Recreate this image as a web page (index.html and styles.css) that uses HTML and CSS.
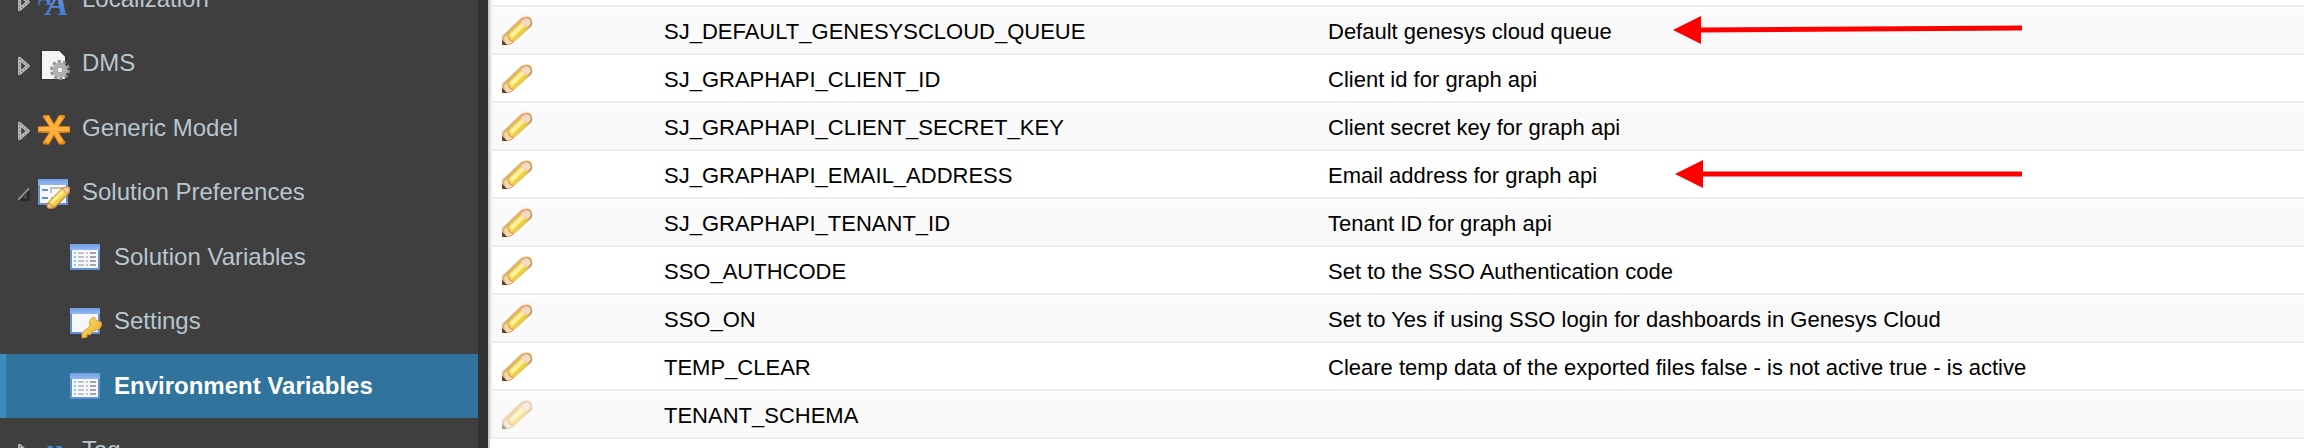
FILE: index.html
```html
<!DOCTYPE html>
<html lang="en">
  <head>
    <meta charset="utf-8" />
    <title>Environment Variables</title>
    <link rel="stylesheet" href="styles.css" />
  </head>
  <body>
    <!-- Shared icons -->
    <svg class="sprite" aria-hidden="true">
      <defs>
        <linearGradient id="wood" x1="0" y1="0" x2="1" y2="1">
          <stop offset="0.3" stop-color="#e6bc80" />
          <stop offset="0.7" stop-color="#d08a3c" />
        </linearGradient>
        <linearGradient id="bar" x1="0" y1="0" x2="0" y2="1">
          <stop offset="0" stop-color="#6f9fe4" />
          <stop offset="1" stop-color="#94b8ee" />
        </linearGradient>
        <linearGradient id="gold" x1="0" y1="0" x2="1" y2="1">
          <stop offset="0" stop-color="#ffe680" />
          <stop offset="1" stop-color="#e8a420" />
        </linearGradient>
        <linearGradient id="blue" x1="0" y1="0" x2="0" y2="1">
          <stop offset="0" stop-color="#75aaf0" />
          <stop offset="1" stop-color="#3a70d0" />
        </linearGradient>
        <symbol id="pencil" viewBox="0 0 32 32">
          <path d="M1 30V21L20 3Q23 1 26 1.500Q31 2 31 7V10.500L11 28.500L8 30Z" fill="url(#wood)" />
          <path d="M7 20L20 7L27 13L13.500 26Q8 25.500 7 20Z" fill="#f2d848" />
          <path d="M8.500 20L20.500 8.500L23.500 11L11.500 23Z" fill="#faf2a4" />
          <path d="M12 25L26 12" stroke="#ecc83a" stroke-width="1.500" />
          <path d="M20.500 6.500Q23 3 26.500 3.500Q30 4.500 29.500 9L27 12Q21.500 11.500 20.500 6.500Z" fill="#f4dac6" />
          <path d="M3 22.500L6 20.500Q7 26 12 27L8 29.500H4Z" fill="#f6d8b8" />
          <path d="M1 25L6.500 30H1Z" fill="#5a4828" />
        </symbol>
        <symbol id="toggle" viewBox="0 0 12 20">
          <path d="M1.500 2.500V17.500L10 10Z" fill="#3f3f3f" stroke="#b8b8b8" stroke-width="3.500" stroke-linejoin="round" />
          <path d="M1.500 2.500V17.500L10 10Z" fill="none" stroke="#8e8e8e" stroke-width="1.500" stroke-dasharray="1.500 2" />
        </symbol>
        <symbol id="toggle-open" viewBox="0 0 12 20">
          <path d="M0 16L12 4V16Z" fill="#2a2a2a" />
          <path d="M0 15L11 3.500" stroke="#8a8a8a" stroke-width="2" />
          <path d="M5.500 13L8.500 9.500V13Z" fill="#606060" />
        </symbol>
        <symbol id="localization" viewBox="0 0 32 32">
          <text x="-1" y="20" class="glyph-small">A</text>
          <text x="8" y="30" class="glyph-big">A</text>
        </symbol>
        <symbol id="page-gear" viewBox="0 0 32 32">
          <path d="M2 1H22L29 8V31H2Z" fill="#2c2c2c" opacity="0.5" />
          <path d="M4 2H21L27 8V30H4Z" fill="#f4f4f4" />
          <path d="M21 2V8H27Z" fill="#fff" />
          <circle cx="22" cy="21" r="8.500" fill="none" stroke="#929292" stroke-width="3" stroke-dasharray="3.340 2" />
          <circle cx="22" cy="21" r="5.500" fill="#eee" stroke="#b0b0b0" stroke-width="4" />
          <circle cx="22" cy="21" r="3" fill="#f4f4f4" stroke="#909090" />
        </symbol>
        <symbol id="asterisk" viewBox="0 0 32 32">
          <path d="M0 12.500L11 12L4.500 2.500L6 1H11L16 9.500L21 1H26L27.500 2.500L21 12L32 12.500V18.500L21 19L27.500 28.500L26 30.500H21L16 22L11 30.500H6L4.500 28.500L11 19L0 18.500Z" fill="#e88e14" />
          <path d="M1 15H31M8.500 3L23.500 28M23.500 3L8.500 28" stroke="#ffb040" stroke-width="4" />
        </symbol>
        <symbol id="window" viewBox="0 0 32 32">
          <rect x="0" y="1" width="30" height="26" rx="1" fill="#6490d6" />
          <rect x="0" y="1" width="30" height="6" rx="1" fill="url(#bar)" />
          <rect x="2" y="7" width="26" height="18" fill="#f6f8fd" />
        </symbol>
        <symbol id="form-pencil" viewBox="0 0 32 32">
          <use href="#window" width="32" height="32" />
          <path d="M4 12H10M4 20H10" stroke="#5f8ede" stroke-width="2" />
          <path d="M13 15V10H26M13 20H17" stroke="#c0c0c0" stroke-width="2" fill="none" />
          <path d="M8 26L24 10Q28 7 32 9Q33 14 30 17L17 30Q12 32 9 30Z" fill="#d0903c" />
          <path d="M11 24L24 11L29 16L17 28Q12 28 11 24Z" fill="#f3d24a" />
          <path d="M12 24L24.500 12L26.500 14L14 26Z" fill="#faec98" />
          <path d="M25 11Q28 8 31 10Q31 14 29.500 15.500Z" fill="#f4cfae" />
          <path d="M9.500 27L11 26Q12 28.500 15 29L11 30Z" fill="#f2cfa0" />
        </symbol>
        <symbol id="table" viewBox="0 0 32 32">
          <use href="#window" width="32" height="32" />
          <path d="M4 10H6M4 14H6M4 18H6M4 22H6" stroke="#86c4f8" stroke-width="2" />
          <path d="M8 10H14M8 14H14M8 18H14M8 22H14M16 10H18M16 14H18M16 18H18M16 22H18" stroke="#c4c4c4" stroke-width="2" />
          <path d="M20 10H26M20 14H26M20 18H26M20 22H26" stroke="#a4a4a4" stroke-width="2" />
        </symbol>
        <symbol id="form-key" viewBox="0 0 32 32">
          <use href="#window" width="32" height="32" />
          <path d="M12 31L12 26L20 19Q18 14 22 11L24 10L27 14L31 15Q33 20 27 23L23 24L20 28L17 27L17 30Z" fill="url(#gold)" stroke="#e0a030" />
        </symbol>
        <symbol id="tag" viewBox="0 0 32 32">
          <path d="M9 10H14L20 18L14 26H9L14 18ZM18 10H23L29 18L23 26H18L23 18Z" fill="#3f8fd0" />
        </symbol>
      </defs>
    </svg>

    <div class="layout">
      <nav class="sidebar">
        <ul class="menu">
          <li class="item">
            <button class="toggle" aria-label="Expand Localization"><svg><use href="#toggle" /></svg></button>
            <a href="#localization-page"><svg class="icon"><use href="#localization" /></svg>Localization</a>
          </li>
          <li class="item">
            <button class="toggle" aria-label="Expand DMS"><svg><use href="#toggle" /></svg></button>
            <a href="#dms"><svg class="icon"><use href="#page-gear" /></svg>DMS</a>
          </li>
          <li class="item">
            <button class="toggle" aria-label="Expand Generic Model"><svg><use href="#toggle" /></svg></button>
            <a href="#generic-model"><svg class="icon"><use href="#asterisk" /></svg>Generic Model</a>
          </li>
          <li class="item">
            <button class="toggle" aria-label="Collapse Solution Preferences"><svg><use href="#toggle-open" /></svg></button>
            <a href="#solution-preferences"><svg class="icon"><use href="#form-pencil" /></svg>Solution Preferences</a>
          </li>
          <li class="item child">
            <a href="#solution-variables"><svg class="icon"><use href="#table" /></svg>Solution Variables</a>
          </li>
          <li class="item child">
            <a href="#settings"><svg class="icon"><use href="#form-key" /></svg>Settings</a>
          </li>
          <li class="item child active">
            <a href="#environment-variables"><svg class="icon"><use href="#table" /></svg>Environment Variables</a>
          </li>
          <li class="item">
            <button class="toggle" aria-label="Expand Tag"><svg><use href="#toggle" /></svg></button>
            <a href="#tags"><svg class="icon"><use href="#tag" /></svg>Tag</a>
          </li>
        </ul>
      </nav>

      <main class="content">
        <table class="variables">
          <colgroup>
            <col class="col-edit" />
            <col class="col-name" />
            <col />
          </colgroup>
          <tbody>
            <tr>
              <td></td>
              <td></td>
              <td></td>
            </tr>
            <tr>
              <td><button class="edit" aria-label="Edit"><svg><use href="#pencil" /></svg></button></td>
              <td>SJ_DEFAULT_GENESYSCLOUD_QUEUE</td>
              <td>
                Default genesys cloud queue
                <svg class="arrow" viewBox="0 0 350 28">
                  <path d="M0 14L28 0V28Z" fill="#f00" />
                  <path d="M26 14L349 12" stroke="#f00" stroke-width="5" />
                </svg>
              </td>
            </tr>
            <tr>
              <td><button class="edit" aria-label="Edit"><svg><use href="#pencil" /></svg></button></td>
              <td>SJ_GRAPHAPI_CLIENT_ID</td>
              <td>Client id for graph api</td>
            </tr>
            <tr>
              <td><button class="edit" aria-label="Edit"><svg><use href="#pencil" /></svg></button></td>
              <td>SJ_GRAPHAPI_CLIENT_SECRET_KEY</td>
              <td>Client secret key for graph api</td>
            </tr>
            <tr>
              <td><button class="edit" aria-label="Edit"><svg><use href="#pencil" /></svg></button></td>
              <td>SJ_GRAPHAPI_EMAIL_ADDRESS</td>
              <td>
                Email address for graph api
                <svg class="arrow" viewBox="0 0 350 28">
                  <path d="M2 14L30 0V28Z" fill="#f00" />
                  <path d="M28 14H349" stroke="#f00" stroke-width="5" />
                </svg>
              </td>
            </tr>
            <tr>
              <td><button class="edit" aria-label="Edit"><svg><use href="#pencil" /></svg></button></td>
              <td>SJ_GRAPHAPI_TENANT_ID</td>
              <td>Tenant ID for graph api</td>
            </tr>
            <tr>
              <td><button class="edit" aria-label="Edit"><svg><use href="#pencil" /></svg></button></td>
              <td>SSO_AUTHCODE</td>
              <td>Set to the SSO Authentication code</td>
            </tr>
            <tr>
              <td><button class="edit" aria-label="Edit"><svg><use href="#pencil" /></svg></button></td>
              <td>SSO_ON</td>
              <td>Set to Yes if using SSO login for dashboards in Genesys Cloud</td>
            </tr>
            <tr>
              <td><button class="edit" aria-label="Edit"><svg><use href="#pencil" /></svg></button></td>
              <td>TEMP_CLEAR</td>
              <td>Cleare temp data of the exported files false - is not active true - is active</td>
            </tr>
            <tr>
              <td><button class="edit" aria-label="Edit" disabled><svg><use href="#pencil" /></svg></button></td>
              <td>TENANT_SCHEMA</td>
              <td></td>
            </tr>
          </tbody>
        </table>
      </main>
    </div>
  </body>
</html>
```
FILE: styles.css
```css
* {
  box-sizing: border-box;
}
body {
  margin: 0;
  font-family: "Liberation Sans", Arial, sans-serif;
  background-color: #fff;
  color: #000;
  overflow: hidden;
}
.sprite {
  position: absolute;
  width: 0;
  height: 0;
}
.layout {
  display: flex;
  height: 100vh;
  overflow: hidden;
}

/* Sidebar */
.sidebar {
  flex: 0 0 488px;
  background-color: #3f3f3f;
  border-right: 10px solid #323232;
  overflow: hidden;
}
.menu {
  list-style: none;
  margin: -33px 0 0;
  padding: 0;
}
.item {
  display: flex;
  align-items: center;
  gap: 8px;
  height: 64px;
  padding-left: 12px;
  border-left: 6px solid transparent;
}
.item:nth-child(even) {
  margin-bottom: 1px;
}
.item.child {
  padding-left: 64px;
}
.item a {
  display: flex;
  align-items: center;
  gap: 12px;
  color: #b8c7ce;
  font-size: 24px;
  line-height: 32px;
  text-decoration: none;
  white-space: nowrap;
}
.item.active {
  background-color: #30739c;
  border-left-color: #3c8dbc;
}
.item.active a {
  color: #fff;
  font-weight: bold;
}
.icon {
  width: 32px;
  height: 32px;
  margin-top: 4px;
}
.toggle,
.edit {
  padding: 0;
  border: none;
  background: none;
  cursor: pointer;
}
.toggle svg {
  display: block;
  width: 12px;
  height: 20px;
  margin-top: 6px;
}
.glyph-small,
.glyph-big {
  font-family: "Liberation Serif", serif;
  font-style: italic;
  font-weight: bold;
  fill: url(#blue);
}
.glyph-small {
  font-size: 24px;
}
.glyph-big {
  font-size: 34px;
}

/* Variables table */
.content {
  flex: 1;
  min-width: 0;
  border-left: 2px solid #ccc;
  overflow: hidden;
}
.variables {
  width: 100%;
  margin-top: -41px;
  table-layout: fixed;
  border-collapse: separate;
  border-spacing: 0;
  border-left: 2px solid #ededed;
}
.col-edit {
  width: 160px;
}
.col-name {
  width: 664px;
}
.variables td {
  position: relative;
  height: 48px;
  padding: 2px 12px 0;
  border-top: 2px solid #fff;
  border-bottom: 2px solid #ededed;
  font-size: 22px;
  line-height: 24px;
  white-space: nowrap;
}
.variables td:first-child {
  padding: 0 0 0 9px;
}
.variables tr:nth-child(even) td {
  background-color: #fafafa;
}
.edit {
  display: block;
}
.edit svg {
  display: block;
  width: 32px;
  height: 32px;
}
.edit:disabled {
  opacity: 0.5;
}
.arrow {
  position: absolute;
  top: 7px;
  left: 357px;
  width: 350px;
  height: 28px;
}
```
